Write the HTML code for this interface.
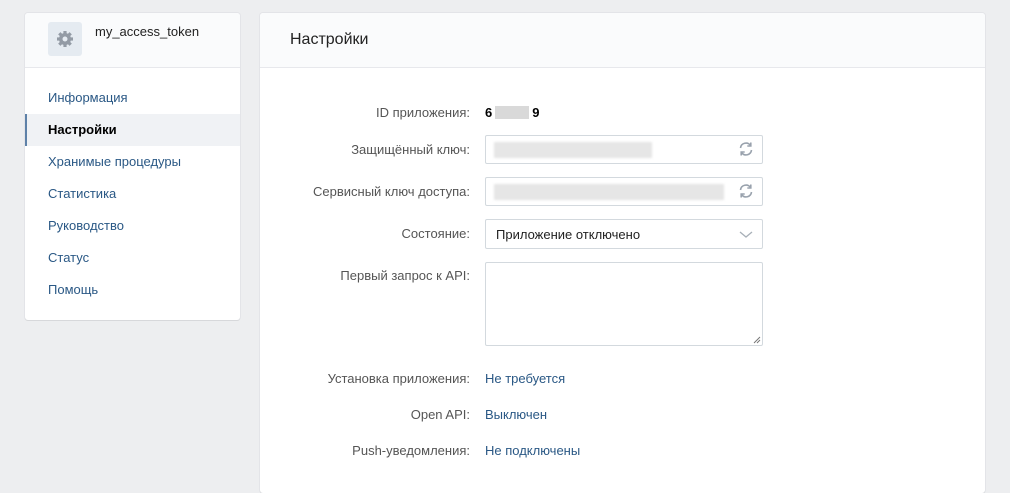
<!DOCTYPE html><html><head><meta charset="utf-8"><style>
body{margin:0;background:#edeef0;font-family:"Liberation Sans",sans-serif;font-size:13px;color:#000;width:1010px;height:484px;overflow:hidden;position:relative}
.card{position:absolute;background:#fff;border-radius:3px;box-shadow:0 1px 0 0 #d7d8db,0 0 0 1px #e3e4e8}
.abs{position:absolute}
.lbl{position:absolute;right:540px;color:#555;text-align:right;white-space:nowrap}
.val{position:absolute;left:485px;white-space:nowrap}
.inp{position:absolute;left:485px;width:276px;height:27px;border:1px solid #d3d9de;border-radius:2px;background:#fff}
.blur{position:absolute;left:8px;top:6px;height:16px;background:#e6e6e6;filter:blur(1px)}
.nav{position:absolute;left:0;width:215px;height:32px;line-height:32px;padding-left:23px;box-sizing:border-box;color:#2a5885}
a{color:#2a5885}
</style></head><body>
<div class="card" style="left:25px;top:13px;width:215px;height:307px">
 <div class="abs" style="left:0;top:0;width:215px;height:54px;background:#fafbfc;border-bottom:1px solid #e7e8ec;border-radius:3px 3px 0 0"></div>
 <div class="abs" style="left:23px;top:9px;width:34px;height:34px;background:#e5ebf1;border-radius:3px">
  <svg width="34" height="34" viewBox="0 0 34 34"><g fill="#939ba5"><circle cx="17" cy="17" r="6"/><g stroke="#939ba5" stroke-width="3.2"><line x1="17" y1="9" x2="17" y2="25"/><line x1="9" y1="17" x2="25" y2="17"/><line x1="11.3" y1="11.3" x2="22.7" y2="22.7"/><line x1="22.7" y1="11.3" x2="11.3" y2="22.7"/></g><circle cx="17" cy="17" r="2.5" fill="#e5ebf1"/></g></svg>
 </div>
 <div class="abs" style="left:70px;top:11px;color:#222">my_access_token</div>
 <div class="nav" style="top:69px">Информация</div>
 <div class="nav" style="top:101px;background:#f0f2f5;border-left:2px solid #5e81a8;padding-left:21px;color:#000;font-weight:bold">Настройки</div>
 <div class="nav" style="top:133px">Хранимые процедуры</div>
 <div class="nav" style="top:165px">Статистика</div>
 <div class="nav" style="top:197px">Руководство</div>
 <div class="nav" style="top:229px">Статус</div>
 <div class="nav" style="top:261px">Помощь</div>
</div>
<div class="card" style="left:260px;top:13px;width:725px;height:480px">
 <div class="abs" style="left:0;top:0;width:725px;height:54px;background:#fafbfc;border-bottom:1px solid #e7e8ec;border-radius:3px 3px 0 0"></div>
 <div class="abs" style="left:30px;top:18px;font-size:16px;color:#222">Настройки</div>
</div>
<div class="lbl" style="top:105px">ID приложения:</div>
<div class="val" style="top:105px;font-weight:bold">6<span style="display:inline-block;width:34px;height:13px;background:#d9d9d9;vertical-align:-2px;margin:0 3px"></span>9</div>
<div class="lbl" style="top:142px">Защищённый ключ:</div>
<div class="inp" style="top:135px"><div class="blur" style="width:158px"></div>
<svg class="abs" style="left:252px;top:5px" width="16" height="16" viewBox="0 0 16 16" fill="none" stroke="#99a2ad" stroke-width="1.6"><path d="M2.5 7A5.5 5.5 0 0 1 12.5 4.5M13.5 9A5.5 5.5 0 0 1 3.5 11.5"/><path d="M12.8 1.5V5H9.3M3.2 14.5V11H6.7"/></svg></div>
<div class="lbl" style="top:184px">Сервисный ключ доступа:</div>
<div class="inp" style="top:177px"><div class="blur" style="width:230px"></div>
<svg class="abs" style="left:252px;top:5px" width="16" height="16" viewBox="0 0 16 16" fill="none" stroke="#99a2ad" stroke-width="1.6"><path d="M2.5 7A5.5 5.5 0 0 1 12.5 4.5M13.5 9A5.5 5.5 0 0 1 3.5 11.5"/><path d="M12.8 1.5V5H9.3M3.2 14.5V11H6.7"/></svg></div>
<div class="lbl" style="top:226px">Состояние:</div>
<div class="inp" style="top:219px;height:28px"><div class="abs" style="left:10px;top:7px;color:#222">Приложение отключено</div>
<svg class="abs" style="left:253px;top:10px" width="14" height="10" viewBox="0 0 14 10" fill="none" stroke="#a8b0b8" stroke-width="1.3"><path d="M1 2l6 5 6-5"/></svg></div>
<div class="lbl" style="top:268px">Первый запрос к API:</div>
<div class="inp" style="top:262px;height:82px"><svg class="abs" style="right:1px;bottom:1px" width="8" height="8" viewBox="0 0 8 8" stroke="#777" stroke-width="1"><path d="M7 1L1 7M7 4L4 7"/></svg></div>
<div class="lbl" style="top:371px">Установка приложения:</div><div class="val" style="top:371px"><a>Не требуется</a></div>
<div class="lbl" style="top:407px">Open API:</div><div class="val" style="top:407px"><a>Выключен</a></div>
<div class="lbl" style="top:443px">Push-уведомления:</div><div class="val" style="top:443px"><a>Не подключены</a></div>
</body></html>
